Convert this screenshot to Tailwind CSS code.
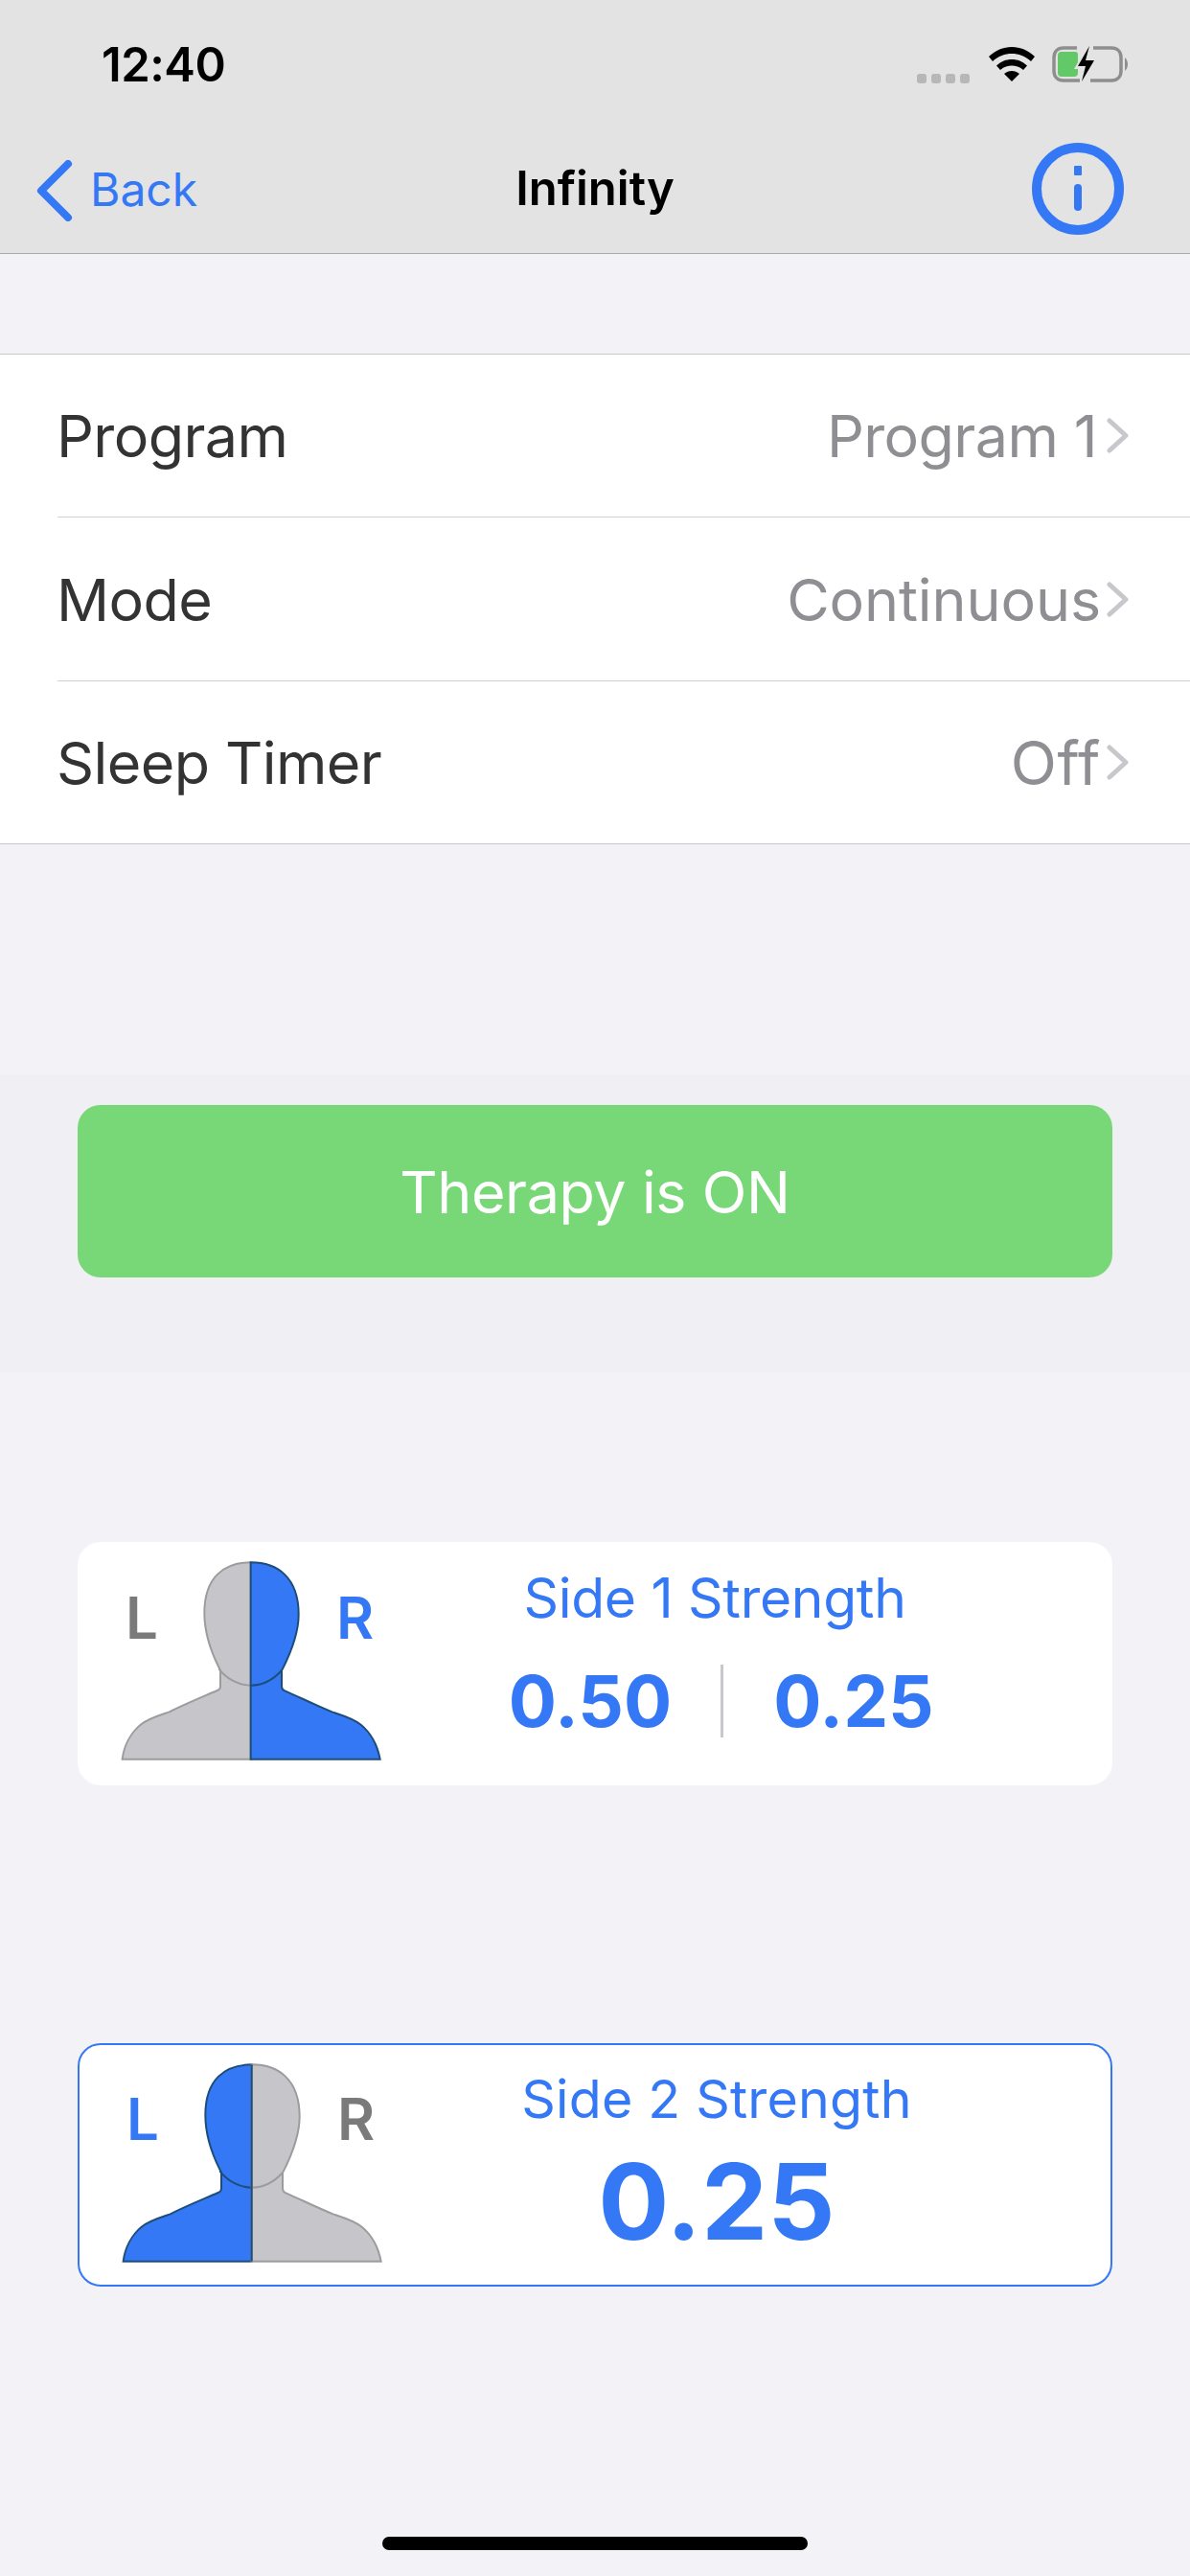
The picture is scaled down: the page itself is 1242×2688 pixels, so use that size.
<!DOCTYPE html>
<html><head><meta charset="utf-8">
<script src="https://cdn.jsdelivr.net/npm/@tailwindcss/browser@4"></script>
</head>
<body class="m-0">
<div class="w-[1242px] h-[2688px] bg-[#f2f2f7] overflow-hidden font-['Inter',sans-serif] flex flex-col">
  <!-- header -->
  <header class="h-[265px] bg-[#e3e3e3] border-b border-[#a9a9ab] flex flex-col shrink-0">
    <div class="h-[130px] relative flex items-start">
      <span class="ml-[106px] mt-[42px] text-[49px] leading-[52px] font-semibold text-black tracking-[-0.5px]">12:40</span>
      <div class="ml-auto mr-[64px] mt-[48px] flex items-end gap-[20px]">
        <div class="flex gap-[5px] mb-[-2px]">
          <span class="w-[10px] h-[10px] rounded-[3px] bg-[#b7b7b7]"></span><span class="w-[10px] h-[10px] rounded-[3px] bg-[#b7b7b7]"></span><span class="w-[10px] h-[10px] rounded-[3px] bg-[#b7b7b7]"></span><span class="w-[10px] h-[10px] rounded-[3px] bg-[#b7b7b7]"></span>
        </div>
        <svg width="48" height="36" viewBox="0 0 48 36"><path d="M24 0C15 0 7 3.500 0 10L4 15C10 9.500 17 7 24 7C31 7 38 9.500 44 15L48 10C41 3.500 33 0 24 0Z" fill="#000"/><path d="M24 13C18 13 13 15 8 19.500L12 24C16 20.500 20 19.500 24 19.500C28 19.500 32 20.500 36 24L40 19.500C35 15 30 13 24 13Z" fill="#000"/><path d="M24 25C21 25 18.500 26 16 28L24 36L32 28C29.500 26 27 25 24 25Z" fill="#000"/></svg>
        <svg width="80" height="38" viewBox="0 0 80 38" class="mb-[-1px] ml-[-2px]"><path d="M26 2H12C6 2 2 6 2 12V26C2 32 6 36 12 36H29M43 2H62C68 2 72 6 72 12V26C72 32 68 36 62 36H40" fill="none" stroke="#8e8e8e" stroke-width="3.500"/><path d="M76 12C78 14 79 16 79 19C79 22 78 24 76 26Z" fill="#8e8e8e"/><path d="M10 6H24Q27 6 27 9V17L23 24L27 24V28Q27 32 23 32H10Q6 32 6 28V10Q6 6 10 6Z" fill="#63c867"/><path d="M39 0L27 21H35L31 37L44 15H35Z" fill="#000"/></svg>
      </div>
    </div>
    <div class="h-[134px] relative flex items-center justify-center">
      <div class="absolute left-[38px] top-[37px] flex items-center">
        <svg width="38" height="64" viewBox="0 0 38 64"><path d="M33 4L5 32L33 60" fill="none" stroke="#3478f6" stroke-width="8" stroke-linecap="round" stroke-linejoin="round"/></svg>
      </div>
      <span class="absolute left-[94px] top-[37px] text-[#3478f6] text-[48px] leading-[62px]">Back</span>
      <span class="text-black text-[49px] leading-[62px] font-semibold">Infinity</span>
      <svg class="absolute left-[1077px] top-[18px]" width="96" height="98" viewBox="0 0 96 98"><circle cx="48" cy="49" r="43" fill="none" stroke="#3478f6" stroke-width="10"/><rect x="44" y="25" width="8" height="10" rx="1" fill="#3478f6"/><rect x="44" y="44" width="8" height="28" rx="4" fill="#3478f6"/></svg>
    </div>
  </header>

  <!-- list -->
  <section class="mt-[104px] bg-white border-y border-[#c8c7cc] shrink-0">
    <div class="h-[170px] ml-[60px] pr-[64px] flex items-center justify-between border-b border-[#d1d1d5]">
      <span class="ml-[-1px] mt-[2px] text-[61px] text-[#333333] tracking-[-0.6px]">Program</span>
      <div class="flex items-center gap-[10px]"><span class="mt-[2px] text-[61px] text-[#8e8e93] tracking-[-0.6px]">Program 1</span><svg width="23" height="37" viewBox="0 0 23 37"><path d="M3 3L20 18.500L3 34" fill="none" stroke="#c7c7cc" stroke-width="5" stroke-linecap="round" stroke-linejoin="round"/></svg></div>
    </div>
    <div class="h-[171px] ml-[60px] pr-[64px] flex items-center justify-between border-b border-[#d1d1d5]">
      <span class="ml-[-1px] mt-[3px] text-[61px] text-[#333333] tracking-[-0.6px]">Mode</span>
      <div class="flex items-center gap-[6px]"><span class="mt-[3px] text-[61px] text-[#8e8e93] tracking-[-0.1px]">Continuous</span><svg width="23" height="37" viewBox="0 0 23 37"><path d="M3 3L20 18.500L3 34" fill="none" stroke="#c7c7cc" stroke-width="5" stroke-linecap="round" stroke-linejoin="round"/></svg></div>
    </div>
    <div class="h-[169px] ml-[60px] pr-[64px] flex items-center justify-between">
      <span class="ml-[-1px] mt-[2px] text-[61px] text-[#333333] tracking-[-0.6px]">Sleep Timer</span>
      <div class="flex items-center gap-[6px]"><span class="mt-[2px] text-[63px] text-[#8e8e93] tracking-[0.6px]">Off</span><svg width="23" height="37" viewBox="0 0 23 37"><path d="M3 3L20 18.500L3 34" fill="none" stroke="#c7c7cc" stroke-width="5" stroke-linecap="round" stroke-linejoin="round"/></svg></div>
    </div>
  </section>

  <!-- therapy band -->
  <section class="mt-[241px] h-[310px] bg-[#f0eff4] px-[81px] pt-[31px] shrink-0">
    <div class="h-[180px] rounded-[24px] bg-[#78d776] flex items-center justify-center text-white text-[61px] tracking-[-0.4px]"><span class="mt-[3px]">Therapy is ON</span></div>
  </section>

  <!-- card 1 -->
  <section class="mt-[177px] mx-[81px] h-[254px] rounded-[24px] bg-white flex shrink-0">
    <div class="relative w-[350px] h-full">
      <span class="absolute left-[50px] top-[44px] text-[60px] leading-[70px] font-semibold text-[#7a7a7a]">L</span>
      <svg class="absolute left-[44px] top-[19px]" width="275" height="210" viewBox="195 115 825 630">
        <path d="M605 122C520 122 460 170 460 280C460 340 480 400 505 450L510 460V510Q510 520 500 523C450 545 400 565 350 590C320 600 285 610 260 630C230 655 208 695 203 738H605Z" fill="#c6c6ca" stroke="#9c9c9e" stroke-width="6"/>
        <path d="M505 455C530 488 570 507 605 507" fill="none" stroke="#9c9c9e" stroke-width="6"/>
        <path d="M605 122C690 122 755 170 755 285C755 340 735 395 705 455L702 460V510Q702 520 712 524C760 545 810 570 860 590C890 600 925 610 950 630C980 655 1002 695 1010 738H605Z" fill="#3478f6" stroke="#1d4e79" stroke-width="6"/>
        <path d="M702 460C675 490 640 507 605 507" fill="none" stroke="#1d4e79" stroke-width="6"/>
      </svg>
      <span class="absolute left-[270px] top-[44px] text-[60px] leading-[70px] font-semibold text-[#3478f6]">R</span>
    </div>
    <div class="w-[630px] flex flex-col items-center text-[#3478f6]">
      <span class="mt-[24px] text-[57px] leading-[70px] tracking-[-0.3px]">Side 1 Strength</span>
      <div class="mt-[27px] ml-[15px] flex items-center">
        <span class="text-[74.500px] leading-[90px] font-bold w-[190px] text-center">0.50</span>
        <span class="w-[3px] h-[76px] bg-[#c8c7cc] mx-[41px]"></span>
        <span class="text-[74.500px] leading-[90px] font-bold w-[190px] text-center">0.25</span>
      </div>
    </div>
  </section>

  <!-- card 2 -->
  <section class="mt-[269px] mx-[81px] h-[254px] rounded-[24px] bg-white border-2 border-[#3478f6] flex shrink-0">
    <div class="relative w-[350px] h-full">
      <span class="absolute left-[49px] top-[42px] text-[60px] leading-[70px] font-semibold text-[#3478f6]">L</span>
      <svg class="absolute left-[43px] top-[18px]" width="275" height="210" viewBox="195 115 825 630">
        <path d="M605 122C520 122 460 170 460 280C460 340 480 400 505 450L510 460V510Q510 520 500 523C450 545 400 565 350 590C320 600 285 610 260 630C230 655 208 695 203 738H605Z" fill="#3478f6" stroke="#1d4e79" stroke-width="6"/>
        <path d="M505 455C530 488 570 507 605 507" fill="none" stroke="#1d4e79" stroke-width="6"/>
        <path d="M605 122C690 122 755 170 755 285C755 340 735 395 705 455L702 460V510Q702 520 712 524C760 545 810 570 860 590C890 600 925 610 950 630C980 655 1002 695 1010 738H605Z" fill="#c6c6ca" stroke="#9c9c9e" stroke-width="6"/>
        <path d="M702 460C675 490 640 507 605 507" fill="none" stroke="#9c9c9e" stroke-width="6"/>
        <path d="M605 122V738" stroke="#1d4e79" stroke-width="6"/>
      </svg>
      <span class="absolute left-[269px] top-[42px] text-[60px] leading-[70px] font-semibold text-[#7a7a7a]">R</span>
    </div>
    <div class="w-[630px] flex flex-col items-center text-[#3478f6]">
      <span class="mt-[21px] text-[55.500px] leading-[70px] tracking-[0.2px]">Side 2 Strength</span>
      <span class="text-[110px] leading-[130px] font-bold mt-[7px]">0.25</span>
    </div>
  </section>

  <div class="mt-auto mb-[27px] mx-auto w-[444px] h-[14px] rounded-full bg-black"></div>
</div>
</body></html>
